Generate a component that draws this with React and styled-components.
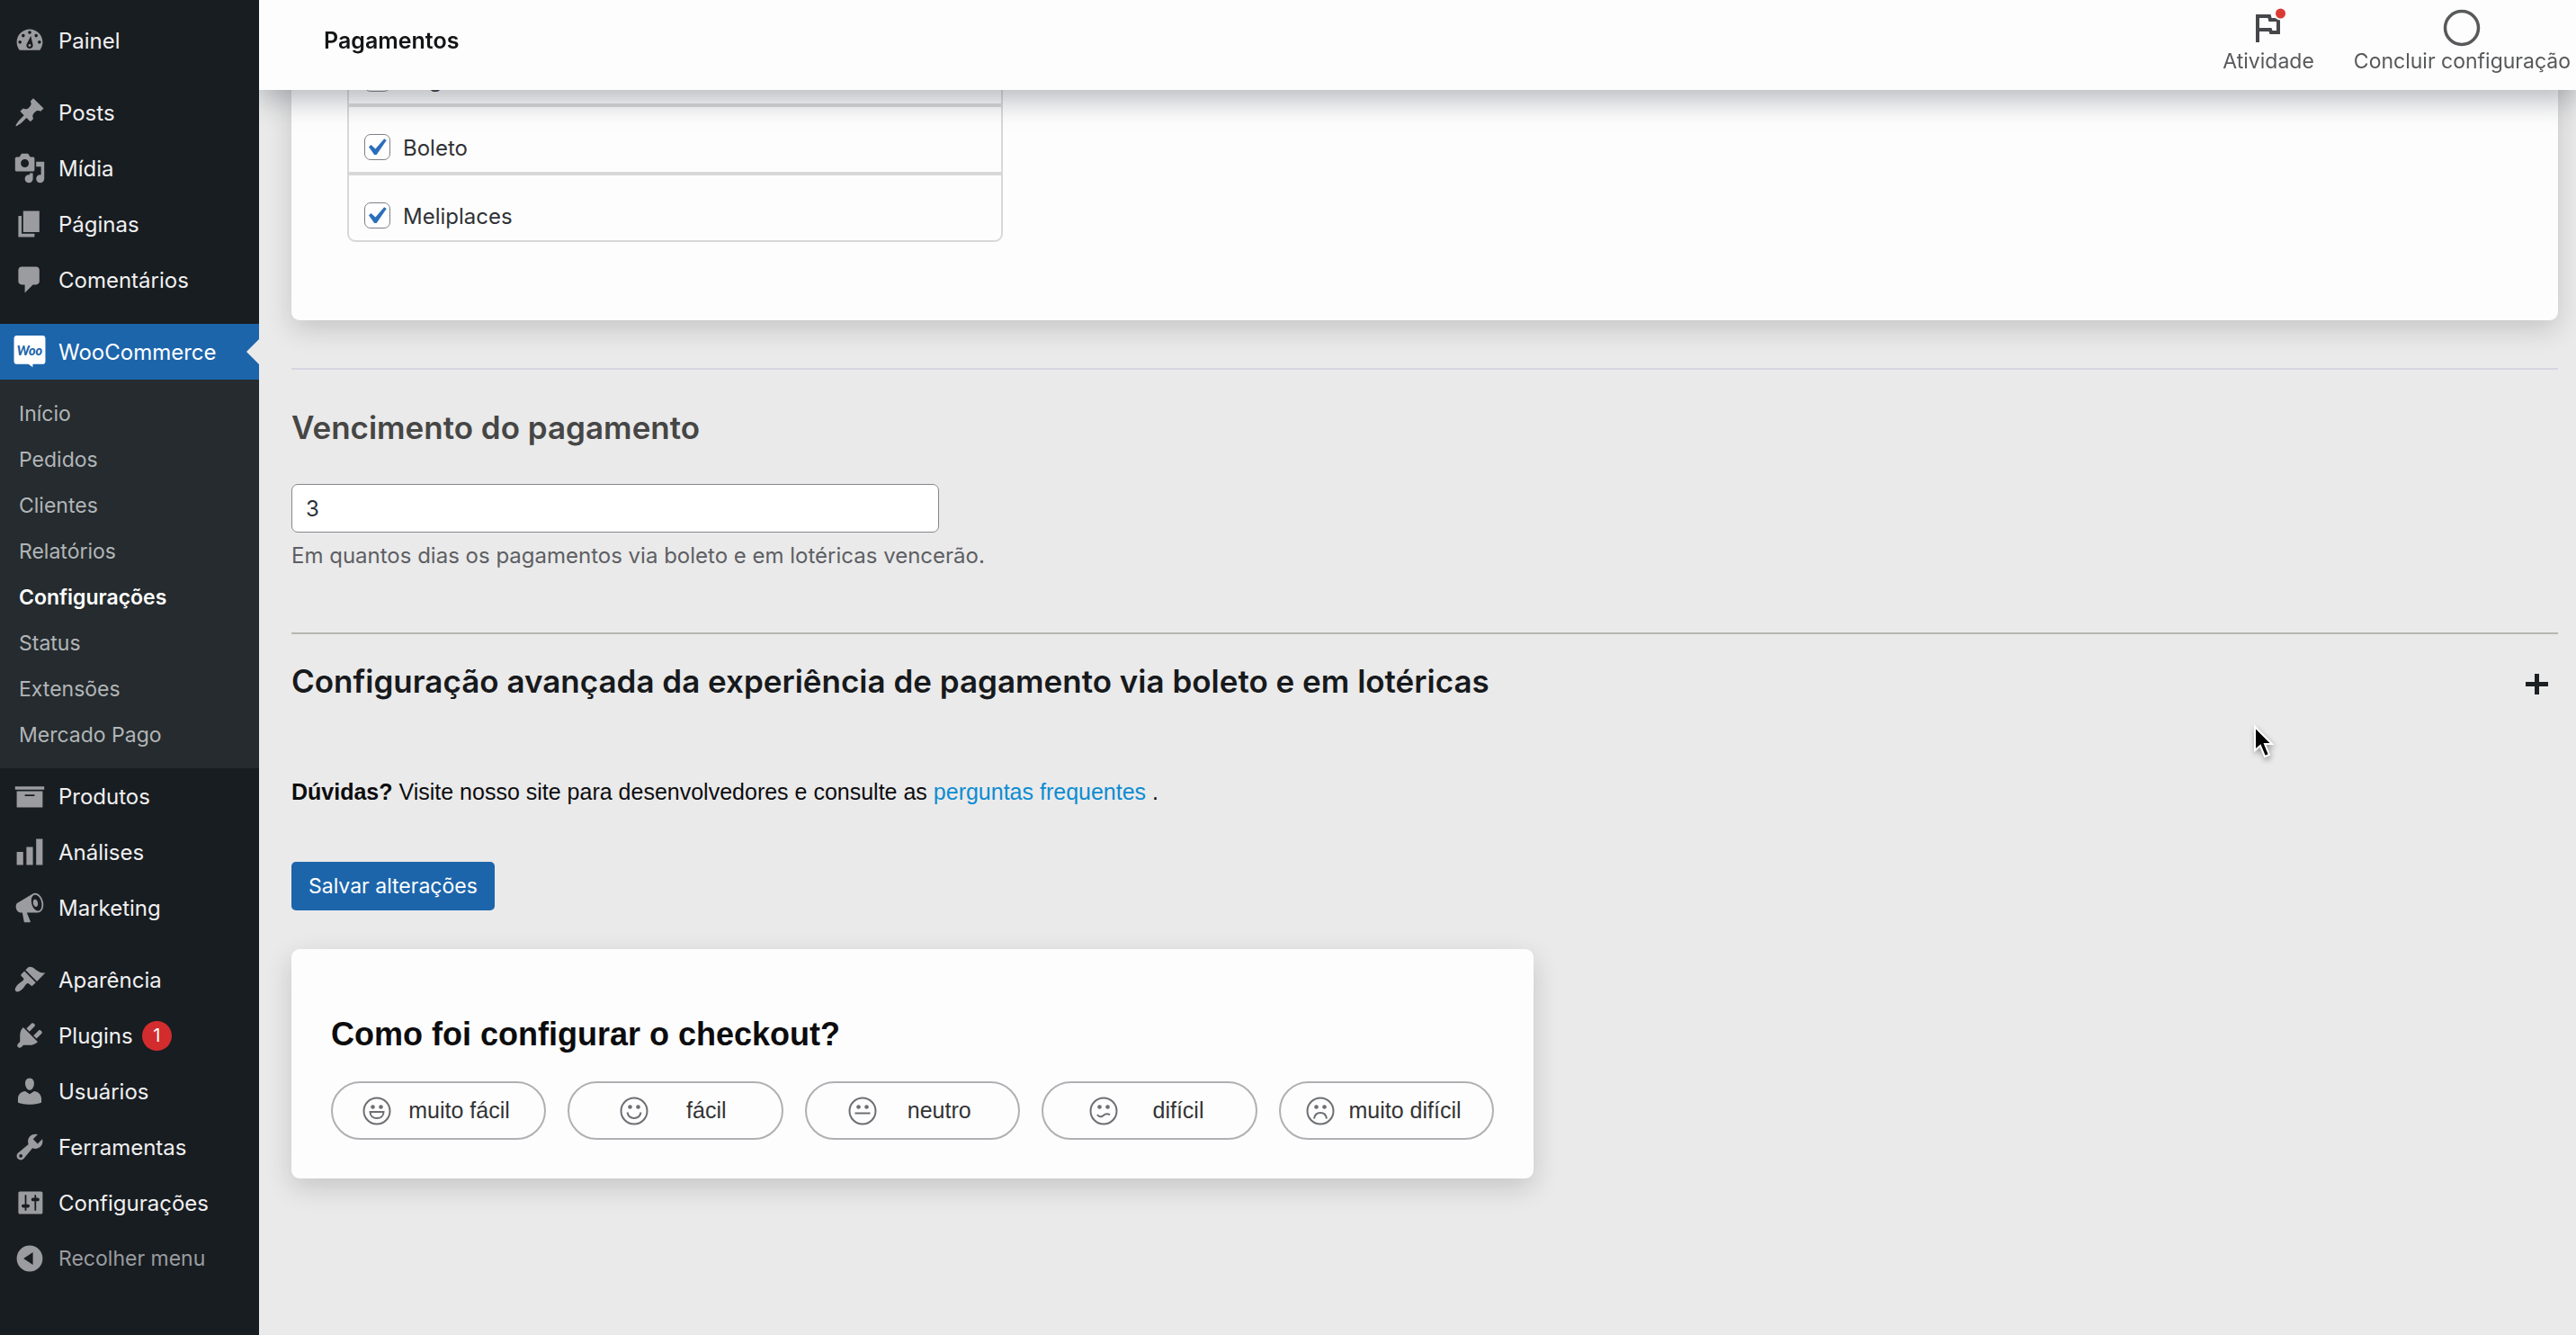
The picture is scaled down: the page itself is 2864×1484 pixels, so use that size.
import React from "react";
import styled, { createGlobalStyle, css } from "styled-components";

const system = `Inter, "Liberation Sans", sans-serif`;
const helvetica = `"Liberation Sans", Arial, sans-serif`;

const color = {
  page: "#eaeaea",
  menu: "#181d21",
  submenu: "#252b2e",
  blue: "#1c65ab",
  icon: "#9a9ca0",
  card: "#fdfdfd",
};

const GlobalStyle = createGlobalStyle`
  *, *::before, *::after { box-sizing: border-box; }
  body { margin: 0; background: ${color.page}; font-family: ${system}; font-size: 24px; color: #2c3338; }
  h1, h2, h3, p, ul { margin: 0; padding: 0; }
  ul { list-style: none; }
`;

const Page = styled.div`
  display: flex;
  min-height: 100vh;
  overflow: hidden;
`;

/* ---------- Side menu ---------- */

const Sidebar = styled.nav`
  position: relative;
  z-index: 3;
  flex: 0 0 288px;
  padding-top: 14px;
  background: ${color.menu};
`;

const MenuGroup = styled.ul`
  & + & {
    margin-top: 18px;
  }
`;

const entry = css`
  display: flex;
  align-items: center;
  gap: 14px;
  width: 100%;
  height: 62px;
  padding: 0 15px;
  border: 0;
  font-family: ${system};
  font-size: 24px;
  text-align: left;
  text-decoration: none;
  white-space: nowrap;
`;

const MenuLink = styled.a`
  ${entry}
  position: relative;
  color: #f0f0f1;
  background: ${(p) => (p.$current ? color.blue : "transparent")};
  ${(p) =>
    p.$current &&
    css`
      color: #fff;
      &::after {
        content: "";
        position: absolute;
        right: 0;
        top: 17px;
        border: 14px solid transparent;
        border-left-width: 0;
        border-right-color: ${color.page};
      }
    `}
`;

const CollapseButton = styled.button`
  ${entry}
  background: transparent;
  font-size: 23px;
  color: #9a9ca0;
`;

const Glyph = styled.svg`
  flex: none;
  width: 36px;
  height: 36px;
  fill: ${color.icon};
`;

const WooText = styled.text`
  font-family: Lato, ${system};
  font-size: 8px;
  font-weight: 900;
  font-style: italic;
  fill: ${color.blue};
`;

const Badge = styled.span`
  display: grid;
  place-items: center;
  width: 33px;
  height: 33px;
  margin-left: -4px;
  border-radius: 50%;
  background: #d32c2e;
  color: #fff;
  font-size: 20px;
`;

const Submenu = styled.ul`
  padding: 13px 0 11px;
  background: ${color.submenu};
`;

const SubmenuLink = styled.a`
  display: block;
  padding: 0 21px;
  font-size: 23px;
  line-height: 51px;
  text-decoration: none;
  color: ${(p) => (p.$current ? "#fff" : "#b1b5b8")};
  font-weight: ${(p) => (p.$current ? 600 : 400)};
`;

/* ---------- Top bar ---------- */

const Main = styled.main`
  flex: 1;
  min-width: 0;
  padding: 0 20px 0 36px;
`;

const TopBar = styled.header`
  position: fixed;
  z-index: 2;
  top: 0;
  left: 288px;
  right: 0;
  display: flex;
  justify-content: space-between;
  height: 100px;
  padding: 0 6px 0 72px;
  background: ${color.card};
  box-shadow: 0 12px 28px rgba(85, 93, 102, 0.4);
`;

const PageTitle = styled.h1`
  font-size: 25px;
  line-height: 90px;
  font-weight: 600;
  color: #141517;
`;

const Actions = styled.div`
  display: flex;
  gap: 44px;
`;

const ActionButton = styled.button`
  display: flex;
  flex-direction: column;
  align-items: center;
  padding: 8px 0 0;
  border: 0;
  background: none;
  font-family: ${system};
  font-size: 23px;
  line-height: 28px;
  color: #58595b;
  svg {
    width: 46px;
    height: 46px;
  }
`;

/* ---------- Content ---------- */

const Card = styled.section`
  border-radius: 9px;
  background: ${color.card};
  box-shadow: 0 10px 30px rgba(0, 0, 0, 0.16);
`;

const MethodsCard = styled(Card)`
  padding: 41px 62px 87px;
`;

const MethodList = styled.ul`
  max-width: 729px;
`;

const MethodRow = styled.li`
  display: flex;
  align-items: center;
  gap: 14px;
  height: 76px;
  padding: 16px 17px 0;
  border: 2px solid #d8d8d8;
  &:last-child {
    border-radius: 0 0 9px 9px;
  }
`;

const tick = encodeURIComponent(
  `<svg xmlns="http://www.w3.org/2000/svg" viewBox="0 0 20 20"><path fill="#2a6fbb" d="M14.83 4.89l1.34.94-5.81 8.38H9.02L5.78 9.67l1.34-1.25 2.57 2.4z"/></svg>`
);

const Checkbox = styled.input`
  appearance: none;
  flex: none;
  width: 29px;
  height: 29px;
  margin: 0;
  border: 1px solid #7d8085;
  border-radius: 7px;
  background: #fff;
  &:checked {
    background: #fff url("data:image/svg+xml,${tick}") -7px -5px / 38px 38px no-repeat;
  }
`;

const MethodLabel = styled.label`
  padding-top: 3px;
  line-height: 32px;
  color: #303236;
`;

const Rule = styled.hr`
  height: 0;
  margin: ${(p) => (p.$strong ? "67px 0 30px" : "53px 0 42px")};
  border: 0;
  border-top: ${(p) => (p.$strong ? "2px solid #b6b6b4" : "2px solid #d5d5e2")};
`;

const FieldTitle = styled.h2`
  margin-bottom: 41px;
  font-size: 35px;
  line-height: 44px;
  font-weight: 600;
  color: #464645;
`;

const TextField = styled.input`
  display: block;
  width: 100%;
  max-width: 720px;
  height: 54px;
  padding: 0 15px;
  border: 1px solid #85888d;
  border-radius: 7px;
  background: #fff;
  font-family: ${system};
  font-size: 24px;
  color: #2c3338;
`;

const Hint = styled.p`
  margin-top: 8px;
  line-height: 36px;
  color: #5d5f64;
`;

const Accordion = styled.button`
  display: flex;
  justify-content: space-between;
  align-items: flex-end;
  width: 100%;
  padding: 0 11px 0 0;
  border: 0;
  background: none;
  font-family: ${system};
  font-size: 35px;
  line-height: 44px;
  font-weight: 600;
  text-align: left;
  color: #17191c;
  svg {
    flex: none;
    width: 25px;
    height: 25px;
    margin-bottom: 6px;
  }
`;

const Help = styled.p`
  margin: 83px 0 60px;
  font-family: ${helvetica};
  font-size: 25px;
  line-height: 36px;
  color: #0c0c0e;
  a {
    color: #0c8cd2;
    text-decoration: none;
  }
`;

const SaveButton = styled.button`
  display: block;
  height: 54px;
  padding: 0 19px;
  border: 0;
  border-radius: 5px;
  background: ${color.blue};
  font-family: ${system};
  font-size: 23px;
  color: #fff;
`;

const SurveyCard = styled(Card)`
  max-width: 1381px;
  margin-top: 43px;
  padding: 73px 44px 43px;
  font-family: ${helvetica};
`;

const SurveyTitle = styled.h3`
  margin-bottom: 30px;
  font-size: 36px;
  line-height: 44px;
  color: #0c0c0e;
`;

const Options = styled.div`
  display: flex;
  gap: 24px;
`;

const Option = styled.button`
  flex: 1;
  display: flex;
  align-items: center;
  justify-content: space-evenly;
  height: 65px;
  padding: 0 19px 0 13px;
  border: 2px solid #b0b0b4;
  border-radius: 33px;
  background: transparent;
  font-family: ${helvetica};
  font-size: 25px;
  color: #333436;
  white-space: nowrap;
  svg {
    flex: none;
    width: 32px;
    height: 32px;
  }
`;

const Pointer = styled.svg`
  position: fixed;
  z-index: 4;
  left: 2502px;
  top: 802px;
  width: 30px;
  height: 46px;
  filter: drop-shadow(1px 3px 3px rgba(0, 0, 0, 0.35));
`;

/* ---------- Data ---------- */

const icons = {
  dashboard:
    "M3.76 16h12.48c1.1-1.37 1.76-3.11 1.76-5 0-4.42-3.58-8-8-8s-8 3.58-8 8c0 1.89.66 3.63 1.76 5zM10 4c.55 0 1 .45 1 1s-.45 1-1 1-1-.45-1-1 .45-1 1-1zM6 6c.55 0 1 .45 1 1s-.45 1-1 1-1-.45-1-1 .45-1 1-1zm8 0c.55 0 1 .45 1 1s-.45 1-1 1-1-.45-1-1 .45-1 1-1zM10.700 7.200L11.900 12.200c.1.3.1.5.1.8 0 1.100-.9 2-2 2s-2-.9-2-2c0-.4.1-.7.3-1zM10 12.200a.8.8 0 1 0 0 1.600a.8.8 0 1 0 0-1.600zM4 10c.55 0 1 .45 1 1s-.45 1-1 1-1-.45-1-1 .45-1 1-1zm12 0c.55 0 1 .45 1 1s-.45 1-1 1-1-.45-1-1 .45-1 1-1z",
  pin: "M10.44 3.02l1.82-1.82 6.36 6.35-1.83 1.82c-1.05-.68-2.48-.57-3.41.36l-.75.75c-.92.93-1.04 2.35-.35 3.41l-1.83 1.82-2.41-2.41-2.8 2.79c-.42.42-3.38 2.71-3.8 2.29s1.86-3.39 2.28-3.81l2.79-2.79L4.1 9.36l1.83-1.82c1.05.69 2.48.57 3.4-.36l.75-.75c.93-.92 1.05-2.35.36-3.41z",
  media:
    "M13 11V4c0-.55-.45-1-1-1h-1.67L9 1H5L3.67 3H2c-.55 0-1 .45-1 1v7c0 .55.45 1 1 1h10c.55 0 1-.45 1-1zM7 4.5c1.38 0 2.5 1.12 2.5 2.5S8.38 9.5 7 9.5 4.5 8.38 4.5 7 5.62 4.5 7 4.5zM14 6h5v10.5c0 1.38-1.12 2.5-2.5 2.5S14 17.88 14 16.5s1.12-2.5 2.5-2.5c.17 0 .34.02.5.05V9h-3V6zm-4 8.05V13h2v3.5c0 1.38-1.12 2.5-2.5 2.5S7 17.88 7 16.5 8.12 14 9.5 14c.17 0 .34.02.5.05z",
  pages: "M6 15V2h10v13H6zm-1 1h8v2H3V5h2v11z",
  comment: "M5 2h9c1.1 0 2 .9 2 2v7c0 1.1-.9 2-2 2h-2l-5 5v-5H5c-1.1 0-2-.9-2-2V4c0-1.1.9-2 2-2z",
  archive: "M19 4v2H1V4h18zM2 7h16v10H2V7zm11 3V9H7v1h6z",
  bars: "M18 18V2h-4v16h4zm-6 0V7H8v11h4zm-6 0v-8H2v8h4z",
  megaphone:
    "M18.15 5.94c.46 1.62.38 3.22-.02 4.48-.42 1.28-1.26 2.18-2.3 2.48-.16.06-.26.06-.4.06-.06.02-.12.02-.18.02-.06.02-.14.02-.22.02h-6.8l2.22 5.5c.02.14-.06.26-.14.34-.08.1-.24.16-.34.16H6.95c-.1 0-.26-.06-.34-.16-.08-.08-.16-.2-.14-.34l-1-5.5H4.25l-.02-.02c-.5.06-1.08-.18-1.54-.62s-.88-1.08-1.06-1.88c-.24-.8-.2-1.56-.02-2.2.18-.62.58-1.08 1.06-1.3l.02-.02 9-5.4c.1-.06.18-.1.24-.16.06-.04.14-.08.24-.12.16-.08.28-.12.5-.18 1.04-.3 2.24.1 3.22.98s1.84 2.24 2.26 3.86zm-2.58 5.98h-.02c.4-.1.74-.34 1.04-.7.58-.7.86-1.76.86-3.04 0-.64-.1-1.3-.28-1.98-.34-1.36-1.02-2.5-1.78-3.24s-1.68-1.1-2.46-.88c-.82.22-1.4.96-1.7 2-.32 1.04-.28 2.36.06 3.72.38 1.36 1 2.5 1.8 3.24.78.74 1.62 1.1 2.48.88zm-2.54-7.08c.22-.04.42-.02.62.04.38.16.76.48 1.02 1s.42 1.2.42 1.78c0 .3-.04.56-.12.8-.18.48-.44.84-.86.94-.34.1-.8-.06-1.14-.4s-.64-.86-.78-1.5c-.18-.62-.12-1.24.02-1.72s.48-.84.82-.94z",
  brush:
    "M14.48 11.06L7.41 3.99l1.5-1.5c.5-.56 2.3-.47 3.51.32 1.21.8 1.43 1.28 2.91 2.1 1.18.64 2.45 1.26 4.45.85zm-.71.71L6.7 4.7 4.93 6.47c-.39.39-.39 1.02 0 1.41l1.06 1.06c.39.39.39 1.03 0 1.42-.6.6-1.43 1.11-2.21 1.69-.35.26-.7.53-1.01.84C1.43 14.23.4 16.08 1.4 17.07c.99 1 2.84-.03 4.18-1.36.31-.31.58-.66.85-1.02.57-.78 1.08-1.61 1.69-2.21.39-.39 1.02-.39 1.41 0l1.06 1.06c.39.39 1.02.39 1.41 0z",
  plug: "M13.11 4.36L9.87 7.6 8 5.73l3.24-3.24c.35-.34 1.05-.2 1.56.32.52.51.66 1.21.31 1.55zm-8 1.77l.91-1.12 9.01 9.01-1.19.84c-.71.71-2.63 1.16-3.82 1.16H6.14L4.9 17.26c-.59.59-1.54.59-2.12 0-.59-.58-.59-1.53 0-2.12l1.24-1.24v-3.88c0-1.13.4-3.19 1.09-3.89zm7.26 3.97l3.24-3.24c.34-.35 1.04-.21 1.55.31.52.51.66 1.21.31 1.55l-3.24 3.25z",
  user: "M10 9.25c-2.27 0-2.73-3.44-2.73-3.44C7 4.02 7.82 2 9.97 2c2.16 0 2.98 2.02 2.71 3.81 0 0-.41 3.44-2.68 3.44zm0 2.57L12.72 10c2.39 0 4.52 2.33 4.52 4.53v2.49s-3.65 1.13-7.24 1.13c-3.65 0-7.24-1.13-7.24-1.13v-2.49c0-2.25 1.94-4.48 4.47-4.48z",
  wrench:
    "M16.68 9.77c-1.34 1.34-3.3 1.67-4.95.99l-5.41 6.52c-.99.99-2.59.99-3.58 0s-.99-2.59 0-3.57l6.52-5.42c-.68-1.65-.35-3.61.99-4.95 1.28-1.28 3.12-1.62 4.72-1.06l-2.89 2.89 2.82 2.82 2.86-2.87c.53 1.58.18 3.39-1.08 4.65zM3.81 16.21c.4.39 1.04.39 1.43 0 .4-.4.4-1.04 0-1.43-.39-.4-1.03-.4-1.43 0-.39.39-.39 1.03 0 1.43z",
  sliders:
    "M18 16V4c0-.6-.4-1-1-1H4c-.6 0-1 .4-1 1v12c0 .6.4 1 1 1h13c.6 0 1-.4 1-1zM8 11h1c.55 0 1 .45 1 1s-.45 1-1 1H8v1.5c0 .28-.22.5-.5.5s-.5-.22-.5-.5V13H6c-.55 0-1-.45-1-1s.45-1 1-1h1V5.5c0-.28.22-.5.5-.5s.5.22.5.5V11zm5-2h-1c-.55 0-1-.45-1-1s.45-1 1-1h1V5.5c0-.28.22-.5.5-.5s.5.22.5.5V7h1c.55 0 1 .45 1 1s-.45 1-1 1h-1v5.5c0 .28-.22.5-.5.5s-.5-.22-.5-.5V9z",
  collapse:
    "M10 2a8 8 0 1 0 0 16a8 8 0 1 0 0-16zM12 13.9V6.1L6.2 10z",
};

const contentMenu = [
  ["pin", "Posts"],
  ["media", "Mídia"],
  ["pages", "Páginas"],
  ["comment", "Comentários"],
];

const shopMenu = [
  ["archive", "Produtos"],
  ["bars", "Análises"],
  ["megaphone", "Marketing"],
];

const adminMenu = [
  ["brush", "Aparência"],
  ["plug", "Plugins", 1],
  ["user", "Usuários"],
  ["wrench", "Ferramentas"],
  ["sliders", "Configurações"],
];

const shopPages = [
  "Início",
  "Pedidos",
  "Clientes",
  "Relatórios",
  "Configurações",
  "Status",
  "Extensões",
  "Mercado Pago",
];

const methods = ["Pagamento na lotérica", "Boleto", "Meliplaces"];

const moods = [
  ["muito fácil", <path d="M8.500 17h15c0 4.500-3.300 7-7.500 7s-7.500-2.500-7.500-7z" />],
  ["fácil", <path d="M8.500 17.500c.8 4 3.800 6.500 7.500 6.500s6.700-2.500 7.500-6.500" />],
  ["neutro", <path d="M7.500 18.500h17" />],
  ["difícil", <path d="M9 20c1.500 2.500 4.500 3 6.700 1s4.800-2 7.300-.8" />],
  ["muito difícil", <path d="M9 24.500c.6-4 3.200-6.500 7-6.500s6.400 2.500 7 6.500" />],
];

const MenuIcon = ({ name }) => (
  <Glyph viewBox="0 0 20 20" aria-hidden="true">
    <path fillRule="evenodd" d={icons[name]} />
  </Glyph>
);

const Menu = ({ items }) =>
  items.map(([icon, label, count]) => (
    <li key={label}>
      <MenuLink href="#">
        <MenuIcon name={icon} />
        {label}
        {count && <Badge>{count}</Badge>}
      </MenuLink>
    </li>
  ));

const Face = ({ children }) => (
  <svg viewBox="0 0 32 32" fill="none" stroke="#6c6e73" strokeWidth="2" aria-hidden="true">
    <circle cx="16" cy="16" r="14.500" />
    <circle cx="11.500" cy="11.500" r="2.300" fill="#6c6e73" stroke="none" />
    <circle cx="20.500" cy="11.500" r="2.300" fill="#6c6e73" stroke="none" />
    {children}
  </svg>
);

export default function App() {
  return (
    <Page>
      <GlobalStyle />
      <Sidebar>
        <MenuGroup>
          <Menu items={[["dashboard", "Painel"]]} />
        </MenuGroup>
        <MenuGroup>
          <Menu items={contentMenu} />
        </MenuGroup>
        <MenuGroup>
          <li>
            <MenuLink href="#" $current>
              <Glyph viewBox="0 0 20 20" aria-hidden="true">
                <path
                  fill="#fff"
                  d="M2.200 0h15.600a1.900 1.900 0 0 1 1.900 1.900v13.900a1.900 1.900 0 0 1-1.900 1.900h-5.900v1.900l-2.700-1.900H2.200A1.900 1.900 0 0 1 .3 15.800V1.900A1.900 1.900 0 0 1 2.200 0z"
                />
                <WooText x="10" y="12" textAnchor="middle">
                  Woo
                </WooText>
              </Glyph>
              WooCommerce
            </MenuLink>
            <Submenu>
              {shopPages.map((label) => (
                <li key={label}>
                  <SubmenuLink href="#" $current={label === "Configurações"}>
                    {label}
                  </SubmenuLink>
                </li>
              ))}
            </Submenu>
          </li>
          <Menu items={shopMenu} />
        </MenuGroup>
        <MenuGroup>
          <Menu items={adminMenu} />
          <li>
            <CollapseButton type="button">
              <MenuIcon name="collapse" />
              Recolher menu
            </CollapseButton>
          </li>
        </MenuGroup>
      </Sidebar>

      <TopBar>
        <PageTitle>Pagamentos</PageTitle>
        <Actions>
          <ActionButton type="button">
            <svg viewBox="0 0 46 46" fill="none" aria-hidden="true">
              <path d="M11 39V10h13l1 4h9v14h-8l-1-3H11" stroke="#45474a" strokeWidth="4" />
              <circle cx="36.500" cy="7" r="7.500" fill={color.card} />
              <circle cx="36.500" cy="7" r="5.500" fill="#dc3a34" />
            </svg>
            Atividade
          </ActionButton>
          <ActionButton type="button">
            <svg viewBox="0 0 46 46" fill="none" aria-hidden="true">
              <circle cx="23" cy="23" r="18.500" stroke="#58595b" strokeWidth="3.500" />
            </svg>
            Concluir configuração
          </ActionButton>
        </Actions>
      </TopBar>

      <Main>
        <MethodsCard>
          <MethodList>
            {methods.map((label, i) => (
              <MethodRow key={label}>
                <Checkbox type="checkbox" id={`method-${i}`} defaultChecked />
                <MethodLabel htmlFor={`method-${i}`}>{label}</MethodLabel>
              </MethodRow>
            ))}
          </MethodList>
        </MethodsCard>

        <Rule />
        <FieldTitle>
          <label htmlFor="due-days">Vencimento do pagamento</label>
        </FieldTitle>
        <TextField id="due-days" type="text" defaultValue="3" />
        <Hint>Em quantos dias os pagamentos via boleto e em lotéricas vencerão.</Hint>

        <Rule $strong />
        <Accordion type="button" aria-expanded="false">
          Configuração avançada da experiência de pagamento via boleto e em lotéricas
          <svg viewBox="0 0 25 25" aria-hidden="true">
            <path d="M12.500 1v23M0 12.500h25" stroke="#1d2023" strokeWidth="5" />
          </svg>
        </Accordion>

        <Help>
          <strong>Dúvidas?</strong> Visite nosso site para desenvolvedores e consulte as{" "}
          <a href="#">perguntas frequentes</a> .
        </Help>
        <SaveButton type="submit">Salvar alterações</SaveButton>

        <SurveyCard>
          <SurveyTitle>Como foi configurar o checkout?</SurveyTitle>
          <Options>
            {moods.map(([label, mouth]) => (
              <Option type="button" key={label}>
                <Face>{mouth}</Face>
                {label}
              </Option>
            ))}
          </Options>
        </SurveyCard>
      </Main>

      <Pointer viewBox="0 0 30 46" aria-hidden="true">
        <path
          d="M5 6v26l6-5 5 12 5-2-5-12h8z"
          fill="#000"
          stroke="#fff"
          strokeWidth="2"
        />
      </Pointer>
    </Page>
  );
}
